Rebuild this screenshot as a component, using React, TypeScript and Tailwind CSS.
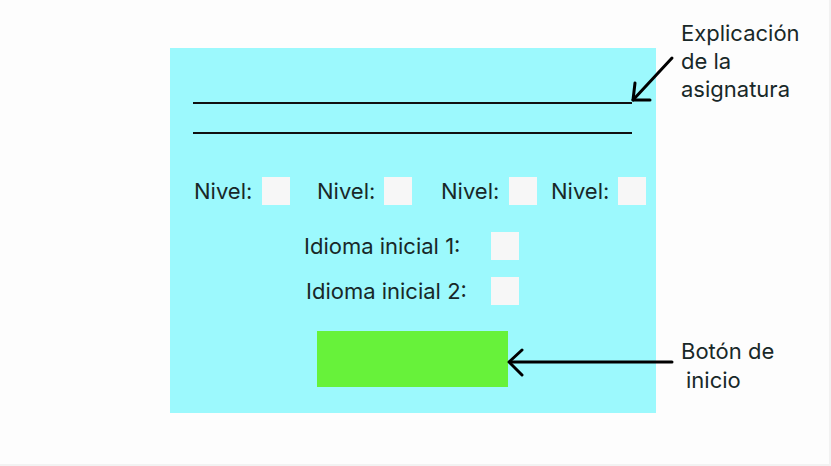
import React from "react";

const font = { fontFamily: "Inter, 'Noto Sans', sans-serif" };

function Box() {
  return <div className="h-[28px] w-[28px] bg-[#f7f7f7]" />;
}

export default function App() {
  return (
    <div
      className="relative h-[466px] w-[831px] overflow-hidden border-b-2 border-r-2 border-[#f2f2f2] bg-[#fdfdfd] text-[22px] leading-[28px] text-[#182828]"
      style={font}
    >
      <div className="ml-[170px] mt-[48px] flex h-[365px] w-[486px] flex-col bg-[#9cf9fd] pl-[23px]">
        <div className="mt-[54px] h-[2px] w-[439px] bg-[#111]" />
        <div className="mt-[28px] h-[2px] w-[439px] bg-[#111]" />

        <div className="mt-[43px] flex h-[28px] items-center">
          <div className="ml-[1px] flex items-center">
            <span className="w-[68px]">Nivel:</span>
            <Box />
          </div>
          <div className="ml-[27px] flex items-center">
            <span className="w-[67px]">Nivel:</span>
            <Box />
          </div>
          <div className="ml-[29px] flex items-center">
            <span className="w-[68px]">Nivel:</span>
            <Box />
          </div>
          <div className="ml-[14px] flex items-center">
            <span className="w-[67px]">Nivel:</span>
            <Box />
          </div>
        </div>

        <div className="mt-[27px] flex h-[28px] items-center">
          <span className="ml-[111px] w-[187px]">Idioma inicial 1:</span>
          <Box />
        </div>
        <div className="mt-[17px] flex h-[28px] items-center">
          <span className="ml-[113px] w-[185px]">Idioma inicial 2:</span>
          <Box />
        </div>

        <div className="ml-[124px] mt-[26px] h-[56px] w-[191px] bg-[#67f23a]" />
      </div>

      <div className="absolute left-[681px] top-[19px]">
        Explicación
        <br />
        de la
        <br />
        asignatura
      </div>
      <div className="absolute left-[681px] top-[337px] leading-[29px]">
        Botón de
        <br />
        <span className="ml-[5px]">inicio</span>
      </div>

      <svg className="absolute left-0 top-0" width="831" height="466" fill="none" stroke="#000" strokeWidth="3" strokeLinecap="round" strokeLinejoin="round">
        <path d="M672 58 L633 100" />
        <path d="M635 83 L633 100 L650 100" />
        <path d="M672 362 L510 362" />
        <path d="M522 350 L509 362 L522 375" />
      </svg>
    </div>
  );
}
